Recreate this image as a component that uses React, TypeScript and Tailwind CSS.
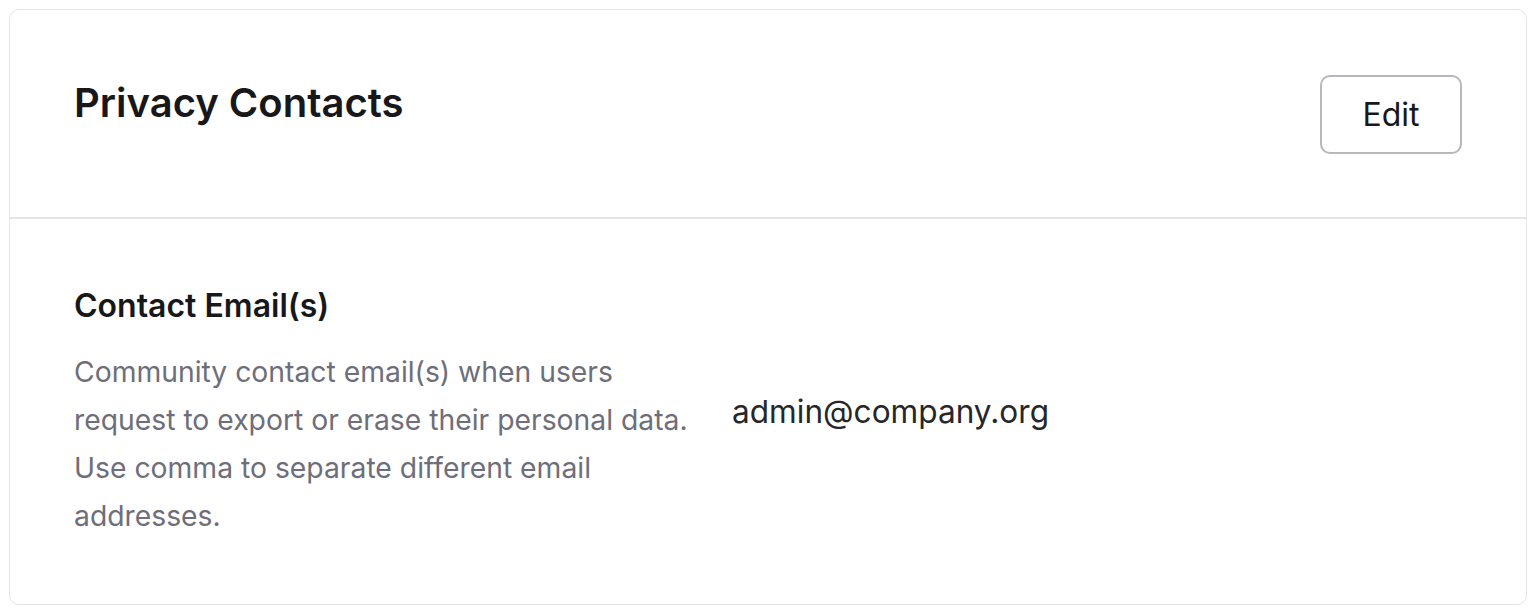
import React from 'react';

const font = { fontFamily: 'Inter, "Noto Sans", sans-serif' };

export default function App() {
  return (
    <div className="min-h-screen bg-white pl-[9px] pr-[13px] pt-[9px]" style={font}>
      <div className="rounded-[10px] border border-[#e4e4e7] bg-white">
        {/* Header */}
        <div className="flex items-start justify-between border-b-2 border-[#e4e4e7] pl-[64px] pr-[64px] pt-[65px] pb-[63px]">
          <h1 className="pt-[4px] text-[40px] font-semibold leading-[48px] text-[#18181b]">
            Privacy Contacts
          </h1>
          <button className="flex h-[79px] w-[142px] items-center justify-center rounded-[10px] border-2 border-[#b7b7bd] text-[32px] text-[#18181b]">
            Edit
          </button>
        </div>

        {/* Body */}
        <div className="flex items-center gap-[30px] px-[64px] pt-[64px] pb-[64px]">
          <div className="w-[628px] shrink-0">
            <h2 className="text-[32px] font-semibold leading-[46px] text-[#18181b]">Contact Email(s)</h2>
            <p className="mt-[19px] text-[28.3px] leading-[48px] text-[#6e6e7a]">
              Community contact email(s) when users request to export or erase their personal data. Use comma
              to separate different email addresses.
            </p>
          </div>
          <div className="text-[31.6px] leading-[48px] text-[#27272a]">admin@company.org</div>
        </div>
      </div>
    </div>
  );
}
